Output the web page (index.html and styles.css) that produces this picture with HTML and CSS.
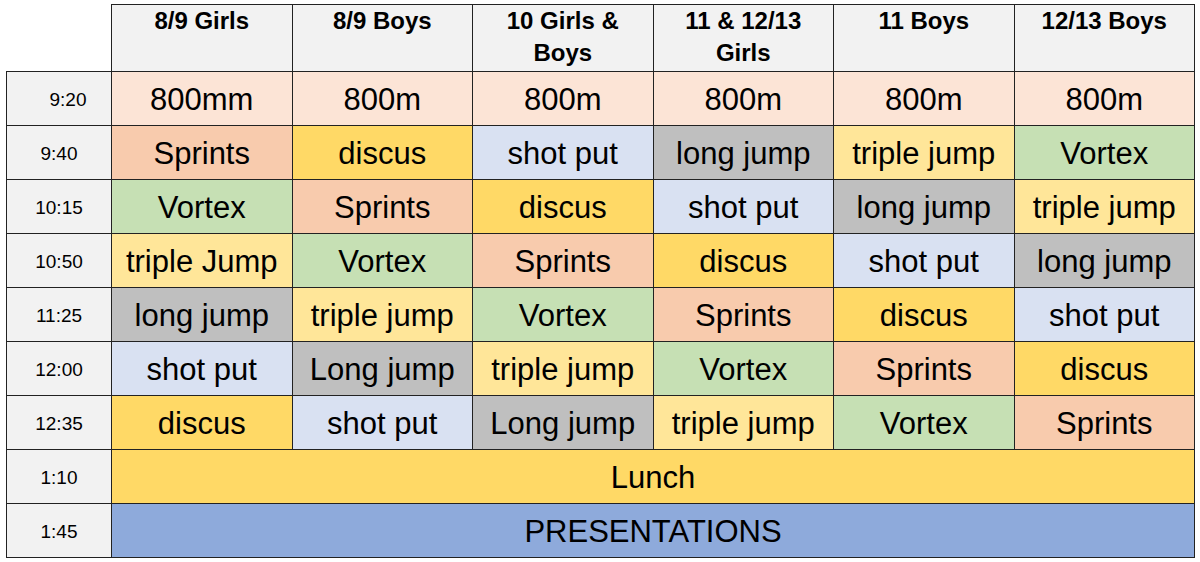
FILE: index.html
```html
<!DOCTYPE html>
<html lang="en">
<head>
<meta charset="utf-8">
<title>Timetable</title>
<link rel="stylesheet" href="styles.css">
</head>
<body>
<table class="schedule">
  <colgroup>
    <col class="col-time">
    <col span="6" class="col-group">
  </colgroup>
  <thead>
    <tr class="head-row">
      <th class="corner"></th>
      <th class="group">8/9 Girls</th>
      <th class="group">8/9 Boys</th>
      <th class="group">10 Girls &amp; Boys</th>
      <th class="group">11 &amp; 12/13 Girls</th>
      <th class="group">11 Boys</th>
      <th class="group">12/13 Boys</th>
    </tr>
  </thead>
  <tbody>
    <tr>
      <td class="time time-shift">9:20</td>
      <td class="ev run">800mm</td>
      <td class="ev run">800m</td>
      <td class="ev run">800m</td>
      <td class="ev run">800m</td>
      <td class="ev run">800m</td>
      <td class="ev run">800m</td>
    </tr>
    <tr>
      <td class="time">9:40</td>
      <td class="ev sprint">Sprints</td>
      <td class="ev discus">discus</td>
      <td class="ev shot">shot put</td>
      <td class="ev long">long jump</td>
      <td class="ev triple">triple jump</td>
      <td class="ev vortex">Vortex</td>
    </tr>
    <tr>
      <td class="time">10:15</td>
      <td class="ev vortex">Vortex</td>
      <td class="ev sprint">Sprints</td>
      <td class="ev discus">discus</td>
      <td class="ev shot">shot put</td>
      <td class="ev long">long jump</td>
      <td class="ev triple">triple jump</td>
    </tr>
    <tr>
      <td class="time">10:50</td>
      <td class="ev triple">triple Jump</td>
      <td class="ev vortex">Vortex</td>
      <td class="ev sprint">Sprints</td>
      <td class="ev discus">discus</td>
      <td class="ev shot">shot put</td>
      <td class="ev long">long jump</td>
    </tr>
    <tr>
      <td class="time">11:25</td>
      <td class="ev long">long jump</td>
      <td class="ev triple">triple jump</td>
      <td class="ev vortex">Vortex</td>
      <td class="ev sprint">Sprints</td>
      <td class="ev discus">discus</td>
      <td class="ev shot">shot put</td>
    </tr>
    <tr>
      <td class="time">12:00</td>
      <td class="ev shot">shot put</td>
      <td class="ev long">Long jump</td>
      <td class="ev triple">triple jump</td>
      <td class="ev vortex">Vortex</td>
      <td class="ev sprint">Sprints</td>
      <td class="ev discus">discus</td>
    </tr>
    <tr>
      <td class="time">12:35</td>
      <td class="ev discus">discus</td>
      <td class="ev shot">shot put</td>
      <td class="ev long">Long jump</td>
      <td class="ev triple">triple jump</td>
      <td class="ev vortex">Vortex</td>
      <td class="ev sprint">Sprints</td>
    </tr>
    <tr>
      <td class="time">1:10</td>
      <td class="ev lunch" colspan="6">Lunch</td>
    </tr>
    <tr>
      <td class="time">1:45</td>
      <td class="ev present" colspan="6">PRESENTATIONS</td>
    </tr>
  </tbody>
</table>
</body>
</html>
```

FILE: styles.css
```css
html, body {
  margin: 0;
  padding: 0;
  background: #ffffff;
}

body {
  padding: 4px 0 0 6px;
  font-family: "Liberation Sans", Arial, sans-serif;
  color: #000;
}

.schedule {
  border-collapse: collapse;
  table-layout: fixed;
  width: 1189px;
}

.col-time {
  width: 105px;
}

.schedule th,
.schedule td {
  border: 1px solid #222;
  padding: 0;
  text-align: center;
}

.schedule .head-row {
  height: 67px;
}

.schedule .corner {
  border: none;
  background: #ffffff;
}

.schedule .group {
  background: #f2f2f2;
  font-size: 24px;
  font-weight: bold;
  line-height: 32px;
  vertical-align: top;
  padding: 0 12px;
}

.schedule tbody tr {
  height: 54px;
}

.schedule .time {
  background: #f2f2f2;
  font-size: 19px;
  padding-top: 2px;
}

.schedule .time-shift {
  padding-left: 18px;
}

.schedule .ev {
  font-size: 31px;
  white-space: nowrap;
  padding-top: 3px;
}

.run { background: #fce4d6; }
.sprint { background: #f8cbad; }
.discus { background: #ffd966; }
.shot { background: #d9e1f2; }
.long { background: #bfbfbf; }
.triple { background: #ffe699; }
.vortex { background: #c6e0b4; }
.lunch { background: #ffd966; }
.present { background: #8eaadb; }
```
